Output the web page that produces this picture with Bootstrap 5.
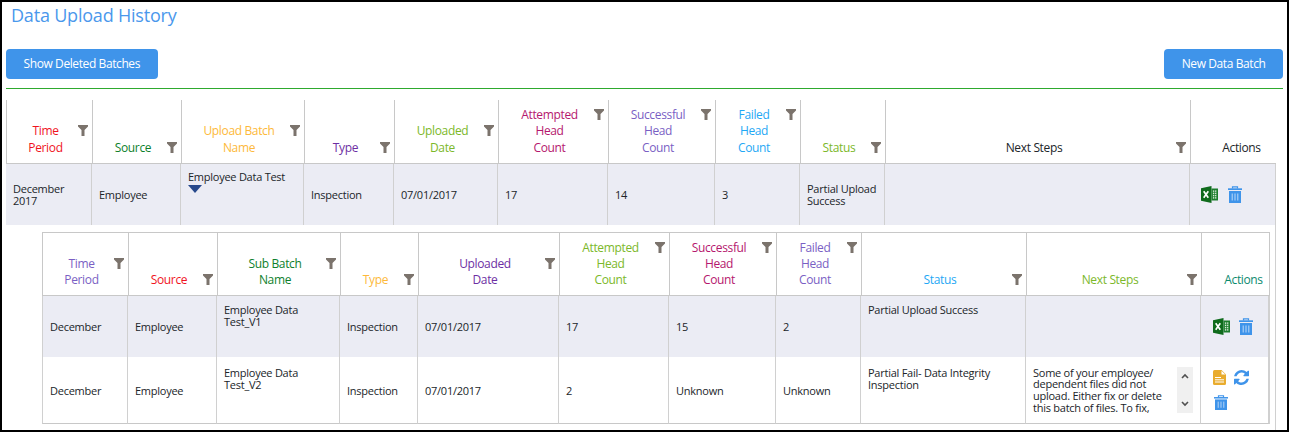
<!DOCTYPE html>
<html>
<head>
  <title>Data Upload History</title>
  <link rel="stylesheet" href="https://cdn.jsdelivr.net/npm/bootstrap@5.3.0/dist/css/bootstrap.min.css">
  <style>
    html, body {
      height: 100%;
      overflow: hidden;
    }

    body {
      font-family: "Open Sans", "Liberation Sans", sans-serif;
      font-size: 11px;
      letter-spacing: -0.25px;
      color: #000;
    }

    .page-frame {
      height: 100vh;
      border: 2px solid #000;
      padding: 0 4px;
      overflow: hidden;
    }

    .page-title {
      font-size: 18px;
      font-weight: 400;
      line-height: 27px;
      letter-spacing: -0.2px;
      margin: 0 0 20px 5px;
      color: #4a98ec;
    }

    .batch-btn {
      height: 30px;
      padding: 0 17.5px;
      font-size: 12px;
      line-height: 30px;
      letter-spacing: -0.4px;
      border: 0;
      border-radius: 4px;
      background-color: #3f94ea;
    }

    .green-rule {
      margin: 9px 0 11px;
      border: 0;
      border-top: 1px solid #2eaa2e;
      opacity: 1;
    }

    .grid-table {
      table-layout: fixed;
      width: 1270px;
      border-collapse: separate;
      border-spacing: 0;
      margin: 0;
    }

    .grid-table th,
    .grid-table td {
      padding: 0;
      border: 0;
      box-shadow: none;
    }

    .grid-head th {
      height: 64px;
      padding: 0 4px 7px 6px;
      vertical-align: bottom;
      font-size: 12px;
      font-weight: 400;
      line-height: 16.5px;
      letter-spacing: -0.35px;
      border-left: 1px solid #c8c8c8;
      border-bottom: 1px solid #c8c8c8;
    }

    .grid-head .actions-head {
      padding: 0 0 7px 16px;
      text-align: center;
    }

    .head-label {
      flex-grow: 1;
      text-align: center;
    }

    .funnel {
      flex: none;
      width: 10px;
      height: 11px;
      margin-top: 2px;
      fill: #7b736c;
    }

    .grid-body td {
      padding: 0 6px 0 7px;
      vertical-align: middle;
      line-height: 12px;
      border-left: 1px solid #d0d0d0;
    }

    .grid-body td:first-child {
      border-left: 0;
    }

    .grid-body .shaded td {
      background-color: #ebecf4;
    }

    .master-row td {
      height: 61px;
    }

    .grid-body .top-cell {
      vertical-align: top;
      padding-top: 7px;
    }

    .expand-arrow {
      display: block;
      width: 14px;
      height: 8px;
      margin-top: 2px;
      fill: #27498c;
    }

    .grid-body .actions-cell {
      padding-left: 11px;
      padding-right: 0;
    }

    .master-body td:last-child {
      border-right: 1px solid #d0d0d0;
    }

    .detail-wrap {
      width: 1270px;
      height: 210px;
      padding: 7px 5px 0 36px;
      border-right: 1px solid #d0d0d0;
    }

    .detail-wrap .grid-table {
      width: 1228px;
    }

    .detail-wrap .grid-head th {
      border-top: 1px solid #c8c8c8;
      height: 64px;
      line-height: 16px;
    }

    .detail-wrap .grid-head th:last-child {
      border-right: 1px solid #c8c8c8;
    }

    .detail-wrap .grid-body td:first-child {
      border-left: 1px solid #d0d0d0;
    }

    .detail-wrap .grid-body td:last-child {
      border-right: 2px solid #d0d0d0;
    }

    .detail-wrap .actions-cell {
      padding-left: 12px;
    }

    .sub-row td {
      height: 61px;
    }

    .sub-row-tall td {
      height: 67px;
      padding-top: 2px;
      border-bottom: 1px solid #c8c8c8;
    }

    .sub-row-tall .top-cell {
      padding-top: 10px;
    }

    .sub-row .top-cell {
      padding-top: 8px;
    }

    .action-icons {
      display: flex;
      flex-wrap: wrap;
      column-gap: 9px;
      row-gap: 10px;
      align-items: flex-start;
    }

    .detail-wrap .action-icons {
      column-gap: 8px;
    }

    .action-icons.narrow {
      width: 44px;
      margin-top: -2px;
    }

    .icon-excel {
      width: 17px;
      height: 17px;
    }

    .icon-trash {
      width: 14px;
      height: 17px;
      margin-left: 1px;
    }

    .narrow .icon-trash {
      height: 15px;
    }

    .icon-doc {
      width: 13px;
      height: 15px;
    }

    .icon-refresh {
      width: 15px;
      height: 15px;
      fill: #3f94ea;
    }

    .steps-scroll {
      display: flex;
      align-items: flex-start;
      margin-top: -2px;
    }

    .steps-text {
      width: 144px;
      padding-right: 6px;
      line-height: 11.67px;
    }

    .fake-scrollbar {
      flex: none;
      width: 16px;
      height: 46px;
      display: flex;
      flex-direction: column;
      justify-content: space-between;
      align-items: center;
      padding: 6px 0;
      background-color: #f0f0f0;
    }

    .fake-scrollbar svg {
      width: 8px;
      height: 6px;
      fill: none;
      stroke: #505050;
      stroke-width: 1.6;
    }

    .c-red { color: #f0131e; }
    .c-green { color: #0e7f2c; }
    .c-amber { color: #fdb93a; }
    .c-purple { color: #6d2fa3; }
    .c-lime { color: #7cb82a; }
    .c-magenta { color: #b5176e; }
    .c-violet { color: #7a5fc4; }
    .c-sky { color: #1fa8f5; }
    .c-teal { color: #0b8a6e; }
  </style>
</head>
<body>
  <svg class="d-none">
    <symbol id="funnel" viewBox="0 0 10 11"><path d="M0 0H10V1.5L6.500 5V11H3.500V5L0 1.500Z"/></symbol>
    <symbol id="excel" viewBox="0 0 17 17">
      <path d="M0 2.200 10.500 0V17L0 14.800Z" fill="#0f6b1c"/>
      <path d="M10.500 2.500H17V14.500H10.500Z" fill="#1c7d2c"/>
      <path d="M11.500 4H15.800V13H11.500ZM11.500 6.300H15.800M11.500 8.500H15.800M11.500 10.700H15.800M13.600 4V13" fill="#dcebdc" stroke="#1c7d2c" stroke-width=".8"/>
      <path d="M2.700 5.300 7.300 11.700M7.300 5.300 2.700 11.700" stroke="#fff" stroke-width="1.700"/>
    </symbol>
    <symbol id="trash" viewBox="0 0 14 17" preserveAspectRatio="none">
      <path d="M4.500 2.500V.8H9.500V2.500" fill="none" stroke="#3f94ea" stroke-width="1.200"/>
      <rect y="2.300" width="14" height="1.700" fill="#3f94ea"/>
      <path d="M1 5H13V17H1Z" fill="#3f94ea"/>
      <path d="M4.200 7.500V14.500M7 7.500V14.500M9.800 7.500V14.500" stroke="#bcd9f8" stroke-width="1"/>
    </symbol>
    <symbol id="doc" viewBox="0 0 13 15">
      <path d="M0 1.500Q0 0 1.500 0H8.500L13 4.500V13.500Q13 15 11.500 15H1.500Q0 15 0 13.500Z" fill="#e9ac2e"/>
      <path d="M8.500 .8V4.500H12.300Z" fill="#fff"/>
      <path d="M2 7.500H8M2 9.800H11M2 12H11" stroke="#fff" stroke-width="1"/>
    </symbol>
    <symbol id="refresh" viewBox="128 128 1536 1536">
      <path d="M1639 1056q0 5-1 7-64 268-268 434.500t-478 166.500q-146 0-282.500-55t-243.500-157l-129 129q-19 19-45 19t-45-19-19-45v-448q0-26 19-45t45-19h448q26 0 45 19t19 45-19 45l-137 137q71 66 161 102t187 36q134 0 250-65t186-179q11-17 53-117 8-23 30-23h192q13 0 22.500 9.500t9.500 22.500zm25-800v448q0 26-19 45t-45 19h-448q-26 0-45-19t-19-45 19-45l138-138q-148-137-349-137-134 0-250 65t-186 179q-11 17-53 117-8 23-30 23h-199q-13 0-22.500-9.500t-9.500-22.500v-7q65-268 270-434.500t480-166.500q146 0 284 55.500t245 156.500l130-129q19-19 45-19t45 19 19 45z"/>
    </symbol>
  </svg>

  <div class="page-frame">
    <h1 class="page-title">Data Upload History</h1>

    <div class="d-flex justify-content-between">
      <button type="button" class="btn btn-primary batch-btn">Show Deleted Batches</button>
      <button type="button" class="btn btn-primary batch-btn">New Data Batch</button>
    </div>
    <hr class="green-rule">

    <!-- master grid: header and content are two tables, content sits 1px to the left -->
    <table class="table grid-table grid-head">
      <colgroup>
        <col style="width:86px"><col style="width:89px"><col style="width:123px"><col style="width:90px"><col style="width:104px"><col style="width:110px"><col style="width:107px"><col style="width:85px"><col style="width:85px"><col style="width:305px"><col style="width:86px">
      </colgroup>
      <thead>
        <tr>
          <th><div class="d-flex align-items-start"><span class="head-label c-red">Time<br>Period</span><svg class="funnel"><use href="#funnel"/></svg></div></th>
          <th><div class="d-flex align-items-start"><span class="head-label c-green">Source</span><svg class="funnel"><use href="#funnel"/></svg></div></th>
          <th><div class="d-flex align-items-start"><span class="head-label c-amber">Upload Batch<br>Name</span><svg class="funnel"><use href="#funnel"/></svg></div></th>
          <th><div class="d-flex align-items-start"><span class="head-label c-purple">Type</span><svg class="funnel"><use href="#funnel"/></svg></div></th>
          <th><div class="d-flex align-items-start"><span class="head-label c-lime">Uploaded<br>Date</span><svg class="funnel"><use href="#funnel"/></svg></div></th>
          <th><div class="d-flex align-items-start"><span class="head-label c-magenta">Attempted<br>Head<br>Count</span><svg class="funnel"><use href="#funnel"/></svg></div></th>
          <th><div class="d-flex align-items-start"><span class="head-label c-violet">Successful<br>Head<br>Count</span><svg class="funnel"><use href="#funnel"/></svg></div></th>
          <th><div class="d-flex align-items-start"><span class="head-label c-sky">Failed<br>Head<br>Count</span><svg class="funnel"><use href="#funnel"/></svg></div></th>
          <th><div class="d-flex align-items-start"><span class="head-label c-lime">Status</span><svg class="funnel"><use href="#funnel"/></svg></div></th>
          <th><div class="d-flex align-items-start"><span class="head-label">Next Steps</span><svg class="funnel"><use href="#funnel"/></svg></div></th>
          <th class="actions-head">Actions</th>
        </tr>
      </thead>
    </table>
    <table class="table grid-table grid-body master-body">
      <colgroup>
        <col style="width:85px"><col style="width:89px"><col style="width:123px"><col style="width:90px"><col style="width:104px"><col style="width:110px"><col style="width:107px"><col style="width:85px"><col style="width:85px"><col style="width:305px"><col style="width:87px">
      </colgroup>
      <tbody>
        <tr class="shaded master-row">
          <td>December 2017</td>
          <td>Employee</td>
          <td class="top-cell">Employee Data Test<svg class="expand-arrow" viewBox="0 0 14 8"><path d="M0 0H14L7 8Z"/></svg></td>
          <td>Inspection</td>
          <td>07/01/2017</td>
          <td>17</td>
          <td>14</td>
          <td>3</td>
          <td>Partial Upload Success</td>
          <td></td>
          <td class="actions-cell">
            <div class="action-icons">
              <svg class="icon-excel"><use href="#excel"/></svg>
              <svg class="icon-trash"><use href="#trash"/></svg>
            </div>
          </td>
        </tr>
      </tbody>
    </table>

    <div class="detail-wrap">
      <table class="table grid-table grid-head">
        <colgroup>
          <col style="width:86px"><col style="width:89px"><col style="width:123px"><col style="width:78px"><col style="width:141px"><col style="width:110px"><col style="width:107px"><col style="width:85px"><col style="width:165px"><col style="width:175px"><col style="width:69px">
        </colgroup>
        <thead>
          <tr>
            <th><div class="d-flex align-items-start"><span class="head-label c-violet">Time<br>Period</span><svg class="funnel"><use href="#funnel"/></svg></div></th>
            <th><div class="d-flex align-items-start"><span class="head-label c-red">Source</span><svg class="funnel"><use href="#funnel"/></svg></div></th>
            <th><div class="d-flex align-items-start"><span class="head-label c-green">Sub Batch<br>Name</span><svg class="funnel"><use href="#funnel"/></svg></div></th>
            <th><div class="d-flex align-items-start"><span class="head-label c-amber">Type</span><svg class="funnel"><use href="#funnel"/></svg></div></th>
            <th><div class="d-flex align-items-start"><span class="head-label c-purple">Uploaded<br>Date</span><svg class="funnel"><use href="#funnel"/></svg></div></th>
            <th><div class="d-flex align-items-start"><span class="head-label c-lime">Attempted<br>Head<br>Count</span><svg class="funnel"><use href="#funnel"/></svg></div></th>
            <th><div class="d-flex align-items-start"><span class="head-label c-magenta">Successful<br>Head<br>Count</span><svg class="funnel"><use href="#funnel"/></svg></div></th>
            <th><div class="d-flex align-items-start"><span class="head-label c-violet">Failed<br>Head<br>Count</span><svg class="funnel"><use href="#funnel"/></svg></div></th>
            <th><div class="d-flex align-items-start"><span class="head-label c-sky">Status</span><svg class="funnel"><use href="#funnel"/></svg></div></th>
            <th><div class="d-flex align-items-start"><span class="head-label c-lime">Next Steps</span><svg class="funnel"><use href="#funnel"/></svg></div></th>
            <th class="actions-head c-teal">Actions</th>
          </tr>
        </thead>
      </table>
      <table class="table grid-table grid-body">
        <colgroup>
          <col style="width:85px"><col style="width:89px"><col style="width:123px"><col style="width:78px"><col style="width:141px"><col style="width:110px"><col style="width:107px"><col style="width:85px"><col style="width:165px"><col style="width:175px"><col style="width:70px">
        </colgroup>
        <tbody>
          <tr class="shaded sub-row">
            <td>December</td>
            <td>Employee</td>
            <td class="top-cell">Employee Data Test_V1</td>
            <td>Inspection</td>
            <td>07/01/2017</td>
            <td>17</td>
            <td>15</td>
            <td>2</td>
            <td class="top-cell">Partial Upload Success</td>
            <td></td>
            <td class="actions-cell">
              <div class="action-icons">
                <svg class="icon-excel"><use href="#excel"/></svg>
                <svg class="icon-trash"><use href="#trash"/></svg>
              </div>
            </td>
          </tr>
          <tr class="sub-row-tall">
            <td>December</td>
            <td>Employee</td>
            <td class="top-cell">Employee Data Test_V2</td>
            <td>Inspection</td>
            <td>07/01/2017</td>
            <td>2</td>
            <td>Unknown</td>
            <td>Unknown</td>
            <td class="top-cell">Partial Fail- Data Integrity Inspection</td>
            <td>
              <div class="steps-scroll">
                <div class="steps-text">Some of your employee/ dependent files did not upload. Either fix or delete this batch of files. To fix,</div>
                <div class="fake-scrollbar">
                  <svg viewBox="0 0 8 6"><path d="M1 5 4 2 7 5"/></svg>
                  <svg viewBox="0 0 8 6"><path d="M1 1 4 4 7 1"/></svg>
                </div>
              </div>
            </td>
            <td class="actions-cell">
              <div class="action-icons narrow">
                <svg class="icon-doc"><use href="#doc"/></svg>
                <svg class="icon-refresh"><use href="#refresh"/></svg>
                <svg class="icon-trash"><use href="#trash"/></svg>
              </div>
            </td>
          </tr>
        </tbody>
      </table>
    </div>
  </div>
</body>
</html>
